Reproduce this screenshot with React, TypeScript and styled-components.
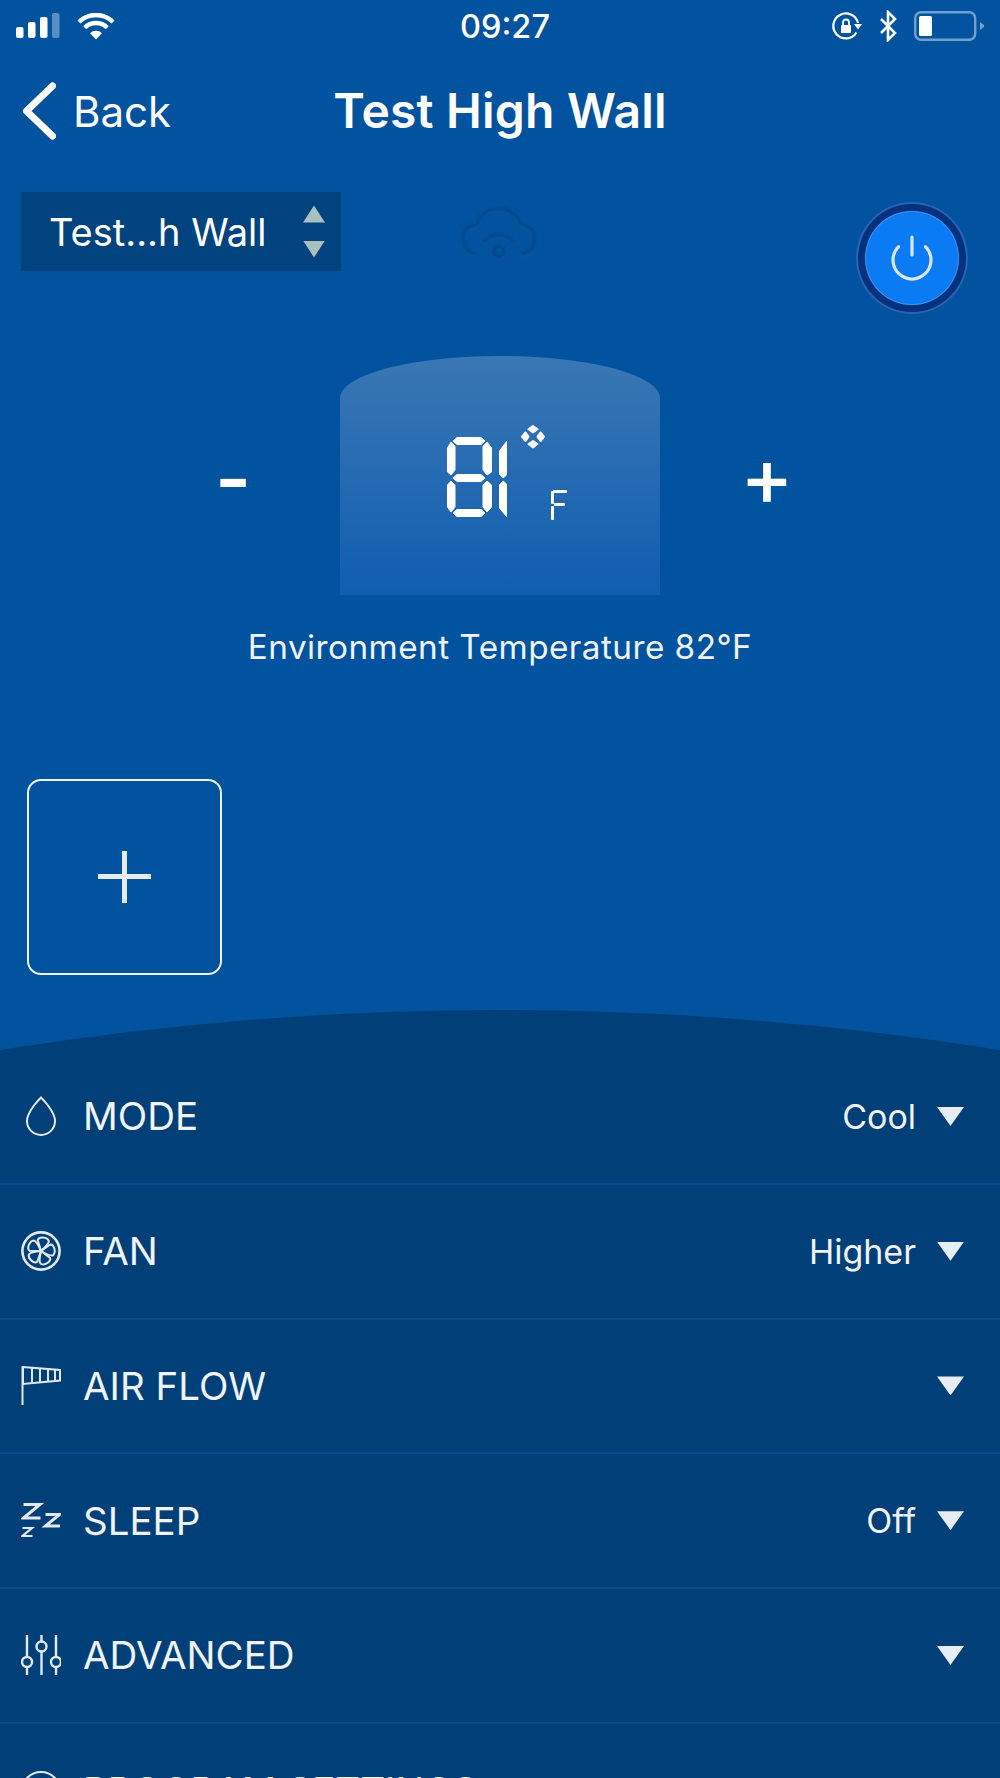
import React from "react";
import styled, { createGlobalStyle } from "styled-components";

const GlobalStyle = createGlobalStyle`
  html, body {
    margin: 0;
    padding: 0;
    background: #01539f;
  }
  * {
    box-sizing: border-box;
  }
`;

const rows = [
  { key: "mode", label: "MODE", value: "Cool" },
  { key: "fan", label: "FAN", value: "Higher" },
  { key: "flow", label: "AIR FLOW", value: "" },
  { key: "sleep", label: "SLEEP", value: "Off" },
  { key: "advanced", label: "ADVANCED", value: "" },
  { key: "program", label: "PROGRAM SETTINGS", value: "" },
];

const RowIcon = ({ name }: { name: string }) => {
  switch (name) {
    case "mode":
      return (
        <IconSvg viewBox="0 0 40 40">
          <path d="M20 1.5C20 1.5 34 15 34 25A14 14 0 0 1 6 25C6 15 20 1.5 20 1.5Z" />
        </IconSvg>
      );
    case "fan":
      return (
        <IconSvg viewBox="0 0 40 40">
          <circle cx="20" cy="20" r="18.6" strokeWidth="2.6" />
          {[0, 72, 144, 216, 288].map((deg) => (
            <path key={deg} transform={`rotate(${deg + 12} 20 20)`} d="M20 20L14.5 10C15 6 23 5 25.5 8.5C26.5 11 23 16 20 20Z" />
          ))}
        </IconSvg>
      );
    case "flow":
      return (
        <IconSvg viewBox="0 0 40 40">
          <path d="M1.5 0V39" />
          <path d="M2 1L39 4V14.5L2 18Z" />
          <path d="M11 2V17M19 2.5V16M27 3V15.5M34 3.5V15" />
        </IconSvg>
      );
    case "sleep":
      return (
        <IconSvg viewBox="0 0 40 40">
          <path d="M2.5 3.5H19L2.5 17H19.5" strokeWidth="3" />
          <path d="M24.5 13.5H38.5L24.5 25H39" strokeWidth="3" />
          <path d="M1.5 27H11L1.5 35H11.5" strokeWidth="2.2" />
        </IconSvg>
      );
    case "advanced":
      return (
        <IconSvg viewBox="0 0 40 40" $stroke={2.4}>
          <path d="M6 0V22M6 32V40M20.5 0V6M20.5 17V40M35 0V22M35 32V40" />
          <circle cx="6" cy="27" r="5" />
          <circle cx="20.5" cy="11.5" r="5" />
          <circle cx="35" cy="27" r="5" />
        </IconSvg>
      );
    default:
      return (
        <IconSvg viewBox="0 0 40 40">
          <circle cx="20" cy="20" r="19" />
        </IconSvg>
      );
  }
};

const App = () => {
  return (
    <Page>
      <GlobalStyle />
      <StatusBar>
        <StatusLeft>
          <svg width="44" height="26" viewBox="0 0 44 26" fill="#fff">
            <rect x="0" y="14" width="7.5" height="11" rx="2" />
            <rect x="12" y="9" width="7.5" height="16" rx="2" />
            <rect x="24" y="4" width="7.5" height="21" rx="2" />
            <rect x="36" y="0" width="7.5" height="25" rx="2" opacity="0.35" />
          </svg>
          <svg width="38" height="27" viewBox="0 0 38 27" fill="none" stroke="#fff" strokeWidth="4.4">
            <path d="M2 9A24 24 0 0 1 36 9" />
            <path d="M7.7 14.7A16 16 0 0 1 30.3 14.7" />
            <path d="M19 26.5L13 20.3A8.5 8.5 0 0 1 25 20.3Z" fill="#fff" stroke="none" />
          </svg>
        </StatusLeft>
        <Clock>09:27</Clock>
        <StatusRight>
          <svg width="32" height="28" viewBox="-3 0 32 28" fill="none" stroke="#fff" strokeWidth="2.2">
            <path d="M23.5 20.5A12.5 12.5 0 1 1 25 11" />
            <path d="M21 12H29L25 17.5Z" fill="#fff" stroke="none" />
            <rect x="8" y="13" width="10" height="8" rx="1" fill="#fff" stroke="none" />
            <path d="M10 13V10.5A3 3 0 0 1 16 10.5V13" strokeWidth="1.8" />
          </svg>
          <svg width="18" height="32" viewBox="0 0 18 32" fill="none" stroke="#fff" strokeWidth="2.6">
            <path d="M2 9L16 23L9 30V2L16 9L2 23" />
          </svg>
          <svg width="71" height="30" viewBox="0 0 71 30">
            <rect x="1.2" y="1.2" width="60" height="27.6" rx="6" fill="none" stroke="#fff" strokeOpacity="0.45" strokeWidth="2.4" />
            <rect x="5" y="5" width="13" height="20" rx="1.5" fill="#fff" />
            <path d="M66 11L70 14V16L66 19Z" fill="#fff" fillOpacity="0.45" />
          </svg>
        </StatusRight>
      </StatusBar>

      <NavBar>
        <BackLink>
          <svg width="34" height="58" viewBox="0 0 34 58" fill="none" stroke="#fff" strokeWidth="7" strokeLinecap="round" strokeLinejoin="round">
            <path d="M30.5 4L4.5 29L30.5 54" />
          </svg>
          <span>Back</span>
        </BackLink>
        <Title>Test High Wall</Title>
      </NavBar>

      <Toolbar>
        <UnitSelect>
          <span>Test...h Wall</span>
          <SelectArrows>
            <Arrow />
            <Arrow $down />
          </SelectArrows>
        </UnitSelect>
        <CloudIcon viewBox="0 0 76 52" width="76" height="52">
          <path d="M15 47C6 46 2 39 2 32C2 24 8 18 16 18C18 8 28 2 38 2C48 2 57 8 60 18C68 18 74 24 74 32C74 40 69 46 60 47" />
          <path d="M23 35C31 26 45 26 53 35" />
          <circle cx="38" cy="45" r="5" />
        </CloudIcon>
        <PowerButton aria-label="Power">
          <svg width="44" height="48" viewBox="0 0 44 48" fill="none" stroke="#d6e8fb" strokeWidth="3.2" strokeLinecap="round">
            <path d="M8.6 11.6A19 19 0 1 0 35.4 11.6" />
            <path d="M22 2V20" />
          </svg>
        </PowerButton>
      </Toolbar>

      <DisplayRow>
        <MinusButton>-</MinusButton>
        <Display>
          <svg width="122" height="98" viewBox="0 0 122 98" fill="#fff" stroke="#fff" strokeWidth="1" strokeLinejoin="round" role="img" aria-label="81°F">
            <polygon points="10,12.5 34,12.5 38,16 34,19.5 10,19.5 6,16" />
            <polygon points="10,49.5 34,49.5 38,53 34,56.5 10,56.5 6,53" />
            <polygon points="10,84.5 34,84.5 38,88 34,91.5 10,91.5 6,88" />
            <polygon points="0.5,23 4,17 8,21 8,45 4,50 0.5,47" />
            <polygon points="0.5,60 4,56 8,60 8,82 4,87 0.5,82" />
            <polygon points="36,21 40,17 44.5,23 44.5,47 40,50 36,45" />
            <polygon points="36,60 40,56 44.5,60 44.5,82 40,87 36,82" />
            <polygon points="59.5,16.5 59.5,50 56,53 52.5,49 52.5,26" />
            <polygon points="56,56 59.5,59 59.5,91.5 52.5,83 52.5,60" />
            <g strokeWidth="2">
              <polygon points="86,1 90.5,4.3 86,7.5 81.5,4.3" />
              <polygon points="86,16 90.5,19 86,22.5 81.5,19" />
              <polygon points="75,11.7 78.5,7.5 81.5,11.7 78.5,16" />
              <polygon points="90.5,11.7 93.5,7.5 97,11.7 93.5,16" />
            </g>
            <g strokeWidth="0">
              <rect x="106" y="65" width="14" height="3" rx="1" />
              <rect x="107" y="78" width="11" height="3" rx="1" />
              <rect x="104" y="66" width="3" height="13" rx="1" />
              <rect x="104" y="81" width="3" height="14" rx="1" />
            </g>
          </svg>
        </Display>
        <PlusButton>+</PlusButton>
      </DisplayRow>

      <AmbientText>Environment Temperature 82°F</AmbientText>

      <AddTile aria-label="Add" />

      <Dome viewBox="0 0 1000 40" preserveAspectRatio="none">
        <path d="M0 40Q500 -40 1000 40Z" />
      </Dome>
      <Panel>
        {rows.map((row) => (
          <Row key={row.key}>
            <RowIconBox>
              <RowIcon name={row.key} />
            </RowIconBox>
            <RowLabel>{row.label}</RowLabel>
            {row.value && <RowValue>{row.value}</RowValue>}
            <Caret />
          </Row>
        ))}
      </Panel>
    </Page>
  );
};

export default App;

const Page = styled.div`
  position: relative;
  width: 1000px;
  height: 1778px;
  overflow: hidden;
  background: #01539f;
  color: #fff;
  font-family: "Inter", "Liberation Sans", sans-serif;
`;

const StatusBar = styled.div`
  display: grid;
  grid-template-columns: 424px 130px 1fr;
  align-items: center;
  height: 52px;
  padding: 0 15px 0 16px;
`;

const StatusLeft = styled.div`
  display: flex;
  align-items: center;
  gap: 17px;
`;

const Clock = styled.div`
  padding-top: 1px;
  font-size: 32.5px;
  font-weight: 500;
  text-align: center;
`;

const StatusRight = styled.div`
  display: flex;
  align-items: center;
  justify-content: flex-end;
  gap: 17px;
`;

const NavBar = styled.div`
  position: relative;
  display: flex;
  align-items: center;
  justify-content: center;
  height: 116px;
`;

const BackLink = styled.div`
  position: absolute;
  left: 22px;
  top: 30px;
  display: flex;
  align-items: center;
  gap: 17px;
  font-size: 42px;
  font-weight: 400;
`;

const Title = styled.div`
  font-size: 48px;
  font-weight: 600;
  letter-spacing: 0.2px;
`;

const Toolbar = styled.div`
  display: grid;
  grid-template-columns: 320px 1fr 94px;
  align-items: start;
  height: 188px;
  padding: 24px 41px 0 21px;
`;

const UnitSelect = styled.div`
  display: flex;
  align-items: center;
  justify-content: space-between;
  height: 79px;
  padding: 0 16px 0 28px;
  background: #01437f;
  font-size: 38px;
`;

const SelectArrows = styled.div`
  display: flex;
  flex-direction: column;
  gap: 18px;
`;

const Arrow = styled.span<{ $down?: boolean }>`
  display: block;
  width: 22px;
  height: 17px;
  background: #a9bfc0;
  clip-path: ${(p) =>
    p.$down ? "polygon(0 0, 100% 0, 50% 100%)" : "polygon(50% 0, 100% 100%, 0 100%)"};
`;

const CloudIcon = styled.svg`
  justify-self: start;
  margin: 15px 0 0 120px;
  fill: none;
  stroke: #02488a;
  stroke-width: 3.4;
  filter: drop-shadow(0 1px 0 rgba(255, 255, 255, 0.08)) blur(1.2px);
`;

const PowerButton = styled.button`
  display: flex;
  align-items: center;
  justify-content: center;
  width: 94px;
  height: 94px;
  margin-top: 19px;
  padding: 2px 0 0;
  border: 0;
  border-radius: 50%;
  background: #0a7bf2;
  box-shadow: inset 0 0 0 1px #3f8ef0, 0 0 0 7px #04327c, 0 0 0 9px #2a62b4;
`;

const DisplayRow = styled.div`
  display: flex;
  justify-content: center;
  align-items: center;
  gap: 75px;
  height: 239px;
`;

const MinusButton = styled.div`
  width: 64px;
  margin-top: -2px;
  font-family: "Liberation Sans", sans-serif;
  font-size: 104px;
  line-height: 1;
  text-align: center;
`;

const PlusButton = styled.div`
  width: 64px;
  font-size: 80px;
  font-weight: 500;
  line-height: 1;
  text-align: center;
`;

const Display = styled.div`
  width: 320px;
  height: 239px;
  padding: 69px 0 0 107px;
  border-radius: 160px 160px 0 0 / 42px 42px 0 0;
  background: linear-gradient(180deg, #3a77b4 0%, #2a6db2 40%, #0f5eb0 100%);
`;

const AmbientText = styled.div`
  margin-top: 27px;
  height: 50px;
  font-size: 33.3px;
  line-height: 50px;
  letter-spacing: 0.45px;
  text-align: center;
  color: #f0f4f8;
`;

const AddTile = styled.div`
  position: relative;
  width: 195px;
  height: 196px;
  margin: 107px 0 0 27px;
  border: 2px solid #f0f4f8;
  border-radius: 14px;

  &::before,
  &::after {
    content: "";
    position: absolute;
    background: #e6ecf3;
  }
  &::before {
    left: 69px;
    top: 93px;
    width: 53px;
    height: 5px;
  }
  &::after {
    left: 93px;
    top: 70px;
    width: 5px;
    height: 52px;
  }
`;

const Dome = styled.svg`
  display: block;
  width: 1000px;
  height: 40px;
  margin-top: 35px;
  fill: #013f78;
`;

const Panel = styled.div`
  background: #013f78;
`;

const Row = styled.div`
  display: flex;
  align-items: center;
  height: 134.75px;
  padding: 0 36px 0 21px;
  border-bottom: 2px solid #0a4a90;

  &:last-child {
    padding-top: 2px;
  }
`;

const RowIconBox = styled.div`
  width: 40px;
  height: 40px;
  margin-right: 23px;
  flex-shrink: 0;
`;

const IconSvg = styled.svg<{ $stroke?: number }>`
  display: block;
  width: 40px;
  height: 40px;
  fill: none;
  stroke: #e3e9f1;
  stroke-width: ${(p) => p.$stroke ?? 2};
`;

const RowLabel = styled.div`
  flex: 1;
  margin-left: -1px;
  font-size: 38.5px;
  color: #f0f4f8;
`;

const RowValue = styled.div`
  margin-right: 21px;
  font-size: 34px;
  color: #f0f4f8;
`;

const Caret = styled.span`
  width: 27px;
  height: 19px;
  background: #e8edf3;
  clip-path: polygon(0 0, 100% 0, 50% 100%);
`;
